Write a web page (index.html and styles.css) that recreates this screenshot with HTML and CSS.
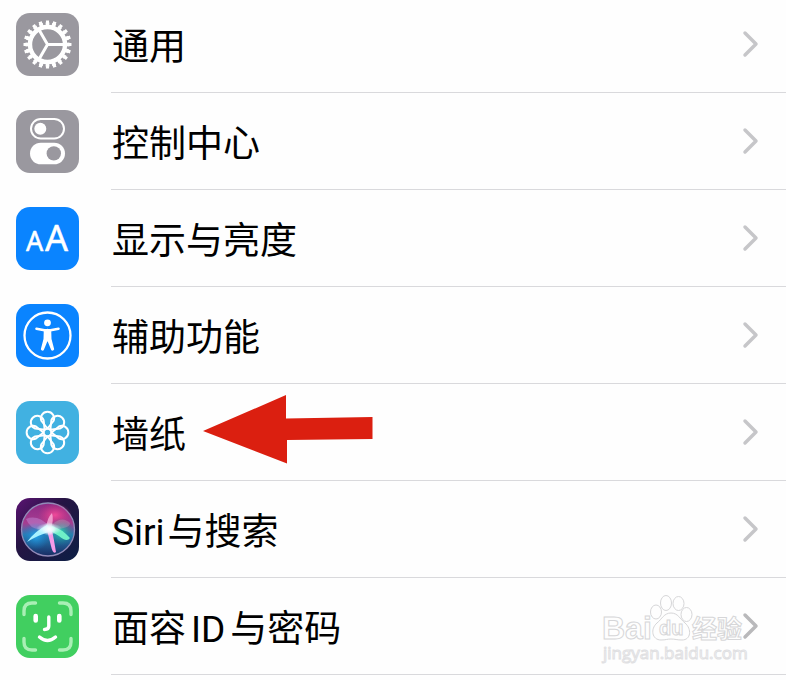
FILE: index.html
```html
<!DOCTYPE html>
<html lang="zh-CN">
<head>
  <meta charset="UTF-8">
  <meta name="viewport" content="width=device-width, initial-scale=1.0">
  <title>设置</title>
  <link rel="stylesheet" href="styles.css">
</head>
<body>
  <nav class="settings">
    <!-- 通用 -->
    <a class="row" href="#general">
      <svg class="icon gray" viewBox="0 0 63 63">
        <g fill="none" stroke="#fff" transform="translate(31.5 31.5)">
          <circle r="17.5" stroke-width="4.4"/>
          <circle r="20.5" stroke-width="3" pathLength="40" stroke-dasharray="1.2 .8" stroke-dashoffset=".6"/>
          <circle r="22.7" stroke-width="2.6" pathLength="40" stroke-dasharray=".9 1.1" stroke-dashoffset=".45"/>
          <path d="M0 0H17M0 0L-8.5 -14.7M0 0L-8.5 14.7" stroke-width="3"/>
        </g>
      </svg>
      <span class="content">
        <span class="label">通用</span>
        <svg class="chevron" viewBox="0 0 18 28"><path d="M3 3L14 14L3 25"/></svg>
      </span>
    </a>

    <!-- 控制中心 -->
    <a class="row" href="#control">
      <svg class="icon gray" viewBox="0 0 63 63">
        <rect x="15" y="9" width="33" height="19.5" rx="9.75" fill="none" stroke="#fff" stroke-width="2"/>
        <circle cx="24.3" cy="18.7" r="6" fill="#fff"/>
        <rect x="14" y="32.7" width="35" height="21.6" rx="10.8" fill="#fff"/>
        <circle cx="37.8" cy="43.4" r="7.2" fill="#9a989f"/>
      </svg>
      <span class="content">
        <span class="label">控制中心</span>
        <svg class="chevron" viewBox="0 0 18 28"><path d="M3 3L14 14L3 25"/></svg>
      </span>
    </a>

    <!-- 显示与亮度 -->
    <a class="row" href="#display">
      <svg class="icon blue" viewBox="0 0 63 63">
        <text class="aa" x="10" y="44" font-size="27">A</text>
        <text class="aa" x="29" y="44" font-size="36">A</text>
      </svg>
      <span class="content">
        <span class="label">显示与亮度</span>
        <svg class="chevron" viewBox="0 0 18 28"><path d="M3 3L14 14L3 25"/></svg>
      </span>
    </a>

    <!-- 辅助功能 -->
    <a class="row" href="#accessibility">
      <svg class="icon blue" viewBox="0 0 63 63">
        <circle cx="31.5" cy="31.5" r="23" fill="none" stroke="#fff" stroke-width="2.3"/>
        <circle cx="31.5" cy="18.8" r="3.4" fill="#fff"/>
        <path d="M20.5 24.8L28.5 26.2H34.5L42.5 24.8M31.5 26V36" fill="none" stroke="#fff" stroke-width="2.6" stroke-linecap="round" stroke-linejoin="round"/>
        <path d="M27.8 25.5H35.2L35.5 35L38.2 45.3Q37.3 47.4 35.3 46.3L31.5 37L27.7 46.3Q25.7 47.4 24.8 45.3L27.5 35Z" fill="#fff"/>
      </svg>
      <span class="content">
        <span class="label">辅助功能</span>
        <svg class="chevron" viewBox="0 0 18 28"><path d="M3 3L14 14L3 25"/></svg>
      </span>
    </a>

    <!-- 墙纸 -->
    <a class="row" href="#wallpaper">
      <svg class="icon sky" viewBox="0 0 63 63">
        <defs>
          <path id="petal" d="M0 -4L-6 -11.5A6.6 6.6 0 1 1 6 -11.5Z"/>
        </defs>
        <g fill="none" stroke="#fff" stroke-width="2" stroke-linejoin="round" transform="translate(31.5 31.5)">
          <use href="#petal"/>
          <use href="#petal" transform="rotate(45)"/>
          <use href="#petal" transform="rotate(90)"/>
          <use href="#petal" transform="rotate(135)"/>
          <use href="#petal" transform="rotate(180)"/>
          <use href="#petal" transform="rotate(225)"/>
          <use href="#petal" transform="rotate(270)"/>
          <use href="#petal" transform="rotate(315)"/>
          <circle r="3.8"/>
        </g>
      </svg>
      <span class="content">
        <span class="label">墙纸</span>
        <svg class="arrow" viewBox="0 0 170 74"><path d="M0 36L83 0V23.5L169.5 22V44L84 45V68.5Z"/></svg>
        <svg class="chevron" viewBox="0 0 18 28"><path d="M3 3L14 14L3 25"/></svg>
      </span>
    </a>

    <!-- Siri 与搜索 -->
    <a class="row" href="#siri">
      <svg class="icon" viewBox="0 0 63 63">
        <defs>
          <linearGradient id="siri-bg" x1="0" y1="0" x2="1" y2="1">
            <stop offset="0" stop-color="#5c1373"/>
            <stop offset=".4" stop-color="#251443"/>
            <stop offset="1" stop-color="#0c1f45"/>
          </linearGradient>
          <linearGradient id="siri-ball" x1="0" y1="0" x2="0" y2="1">
            <stop offset="0" stop-color="#8d2a86"/>
            <stop offset=".38" stop-color="#a63d91"/>
            <stop offset=".6" stop-color="#277fb4"/>
            <stop offset="1" stop-color="#182b62"/>
          </linearGradient>
          <radialGradient id="siri-pink">
            <stop offset="0" stop-color="#f0499a"/>
            <stop offset="1" stop-color="#d9327f" stop-opacity="0"/>
          </radialGradient>
          <radialGradient id="siri-blue">
            <stop offset="0" stop-color="#25a5ea"/>
            <stop offset="1" stop-color="#1877c4" stop-opacity="0"/>
          </radialGradient>
          <radialGradient id="siri-teal">
            <stop offset="0" stop-color="#2cd3b2"/>
            <stop offset="1" stop-color="#177b83" stop-opacity="0"/>
          </radialGradient>
          <radialGradient id="siri-glow">
            <stop offset="0" stop-color="#fff"/>
            <stop offset=".35" stop-color="#f2faff" stop-opacity=".8"/>
            <stop offset="1" stop-color="#dff" stop-opacity="0"/>
          </radialGradient>
        </defs>
        <rect width="63" height="63" fill="url(#siri-bg)"/>
        <circle cx="32" cy="31.5" r="26.5" fill="url(#siri-ball)" stroke="#918bb8" stroke-width="1.3"/>
        <ellipse cx="39" cy="17" rx="17" ry="12" fill="url(#siri-pink)"/>
        <ellipse cx="20" cy="38" rx="14" ry="14" fill="url(#siri-blue)"/>
        <ellipse cx="45" cy="34" rx="13" ry="14" fill="url(#siri-teal)"/>
        <path d="M10 21Q22 16 34 29Q16 36 10 21Z" fill="#c99ae6" opacity=".4"/>
        <path d="M30 30Q31 20 36 15Q38 21 35 31Z" fill="#ffc0e6" opacity=".7"/>
        <path d="M32 30Q45 16 54 25Q54 31 35 31Z" fill="#c9a2bd" opacity=".35"/>
        <path d="M11 44Q19 33 31 27L36 33Q22 37 11 44Z" fill="#a8f1ff"/>
        <path d="M31 31L36 28Q46 31 54 40Q51 45 43 38Z" fill="#6ff0c7"/>
        <path d="M31 32L36 32Q38 42 40 54Q37 57 35 48Z" fill="#f59be7"/>
        <ellipse cx="33" cy="31" rx="13" ry="6" fill="url(#siri-glow)"/>
        <circle cx="33" cy="31" r="7" fill="url(#siri-glow)"/>
      </svg>
      <span class="content">
        <span class="label"><span class="latin-start">Siri</span>与搜索</span>
        <svg class="chevron" viewBox="0 0 18 28"><path d="M3 3L14 14L3 25"/></svg>
      </span>
    </a>

    <!-- 面容 ID 与密码 -->
    <a class="row" href="#faceid">
      <svg class="icon green" viewBox="0 0 63 63">
        <path d="M8 19.5V16Q8 8 16 8H19.5M43.5 8H47Q55 8 55 16V19.5M55 43.5V47Q55 55 47 55H43.5M19.5 55H16Q8 55 8 47V43.5" fill="none" stroke="#a9efb5" stroke-width="3.4" stroke-linecap="round"/>
        <path d="M19.7 21V25.5M43.3 21V25.5" stroke="#fff" stroke-width="4.6" stroke-linecap="round"/>
        <path d="M32.8 22V31Q32.8 34.5 28.5 34.5M23.5 42Q31.5 49 39.5 42" fill="none" stroke="#fff" stroke-width="3.4" stroke-linecap="round"/>
      </svg>
      <span class="content">
        <span class="label">面容<span class="latin">ID</span>与密码</span>
        <svg class="chevron dark" viewBox="0 0 18 28"><path d="M3 3L14 14L3 25"/></svg>
      </span>
    </a>

    <!-- 水印 -->
    <svg class="watermark" viewBox="0 0 150 75">
      <g class="paw">
        <ellipse cx="56" cy="20" rx="5.5" ry="7"/>
        <ellipse cx="66" cy="11" rx="5.5" ry="7.5"/>
        <ellipse cx="78.5" cy="11.5" rx="5.5" ry="7"/>
        <ellipse cx="86.5" cy="22.5" rx="5.5" ry="7"/>
        <path d="M71 21C64 21 62 27 57 31C50 37 52 48 61 48C66 48 67 47 71 47C75 47 77 48 82 48C91 48 92 37 85 31C80 27 78 21 71 21Z"/>
      </g>
      <text class="brand" x="2" y="47" font-size="32">Bai</text>
      <text class="brand" x="59" y="43" font-size="20">du</text>
      <text class="brand cjk" x="92" y="46" font-size="25">经验</text>
      <text class="url" x="3" y="67" font-size="17">jingyan.baidu.com</text>
    </svg>
  </nav>
</body>
</html>
```
FILE: styles.css
```css
body {
  margin: 0;
  background-color: #fefefe;
  font-family: Roboto, 'Noto Sans CJK SC', sans-serif;
  overflow: hidden;
}

/* Lista de ajustes, algo desplazada hacia arriba */
.settings {
  position: relative;
  margin-top: -4px;
}

.row {
  display: flex;
  align-items: center;
  padding-left: 16px;
  gap: 32px;
  color: #000;
  text-decoration: none;
}

.icon {
  flex: none;
  width: 63px;
  height: 63px;
  border-radius: 14px;
}

.gray {
  background-color: #9a989f;
}

.blue {
  background-color: #0a84ff;
}

.sky {
  background-color: #41b1e1;
}

.green {
  background-color: #41cf60;
}

.aa {
  font-family: 'Noto Sans', sans-serif;
  fill: #fff;
  stroke: #fff;
  stroke-width: 0.5px;
  stroke-linejoin: round;
}

.content {
  flex: 1;
  display: flex;
  align-items: center;
  box-sizing: border-box;
  height: 97px;
  padding-right: 26px;
  border-bottom: 1px solid #d9d9dc;
}

.label {
  font-size: 37px;
  line-height: 48px;
  padding-top: 8px;
  padding-left: 1px;
  white-space: nowrap;
}

.latin-start {
  margin-right: 3px;
}

.latin {
  margin: 0 5px;
}

.chevron {
  width: 18px;
  height: 28px;
  margin-left: auto;
  fill: none;
  stroke: #c6c6c9;
  stroke-width: 3.5px;
  stroke-linecap: round;
  stroke-linejoin: round;
}

.dark {
  stroke: #b9b9bb;
}

/* Flecha roja */
.arrow {
  width: 170px;
  height: 74px;
  margin-left: 17px;
  fill: #db1f10;
}

/* Marca de agua */
.watermark {
  position: absolute;
  right: 36px;
  bottom: 8px;
  width: 150px;
  height: 75px;
  pointer-events: none;
}

.paw,
.brand {
  fill: #fefefe;
  stroke: #d6d6d8;
  stroke-width: 1px;
}

.brand {
  font-family: 'Liberation Sans', sans-serif;
  font-weight: bold;
}

.cjk {
  font-family: 'Noto Sans CJK SC', sans-serif;
}

.url {
  font-family: 'Open Sans', sans-serif;
  fill: #fefefe;
  stroke: #e0e0e2;
  stroke-width: 1px;
}
```
